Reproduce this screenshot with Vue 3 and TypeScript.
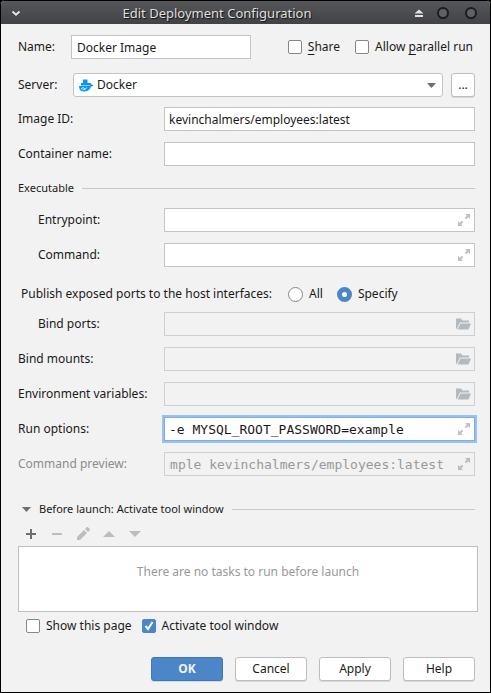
<script setup lang="ts">
import { reactive } from 'vue'

const form = reactive({
  name: 'Docker Image',
  share: false,
  parallel: false,
  server: 'Docker',
  imageId: 'kevinchalmers/employees:latest',
  container: '',
  entrypoint: '',
  command: '',
  ports: 'specify',
  bindPorts: '',
  bindMounts: '',
  env: '',
  runOptions: '-e MYSQL_ROOT_PASSWORD=example',
  showPage: false,
  activate: true,
})

const preview = 'docker run -e MYSQL_ROOT_PASSWORD=example kevinchalmers/employees:latest'

type TextKey = 'imageId' | 'container' | 'entrypoint' | 'command' | 'bindPorts' | 'bindMounts' | 'env' | 'runOptions'
interface Field {
  key: TextKey
  label: string
  indent?: boolean
  icon?: 'expand' | 'folder'
  disabled?: boolean
  focused?: boolean
}

const imageFields: Field[] = [
  { key: 'imageId', label: 'Image ID:' },
  { key: 'container', label: 'Container name:' },
]
const execFields: Field[] = [
  { key: 'entrypoint', label: 'Entrypoint:', indent: true, icon: 'expand' },
  { key: 'command', label: 'Command:', indent: true, icon: 'expand' },
]
const runFields: Field[] = [
  { key: 'bindPorts', label: 'Bind ports:', indent: true, icon: 'folder', disabled: true },
  { key: 'bindMounts', label: 'Bind mounts:', icon: 'folder', disabled: true },
  { key: 'env', label: 'Environment variables:', icon: 'folder', disabled: true },
  { key: 'runOptions', label: 'Run options:', icon: 'expand', focused: true },
]
const groups = [
  { id: 'image', fields: imageFields },
  { id: 'exec', fields: execFields },
  { id: 'run', fields: runFields },
]
</script>

<template>
  <div class="window">
    <header class="titlebar">
      <button class="tb-btn" aria-label="Window menu">
        <svg width="18" height="16" viewBox="0 0 18 16"><path d="M5.500 6.500 9 9.700l3.500-3.200" fill="none" stroke="#e8e8e8" stroke-width="1.800" /></svg>
      </button>
      <h1>Edit Deployment Configuration</h1>
      <div class="tb-right">
        <button class="tb-btn" aria-label="Keep above">
          <svg width="16" height="16" viewBox="0 0 16 16"><path d="M8 4.500l4.500 4h-9zM4 10h8v2H4z" fill="#e2e2e2" /></svg>
        </button>
        <button v-for="b in ['Maximize', 'Close']" :key="b" class="tb-btn" :aria-label="b">
          <svg width="16" height="16" viewBox="0 0 16 16">
            <circle cx="8" cy="8" r="5" fill="#606163" stroke="#1b1c1e" stroke-width="2" />
            <path d="M3 10.500a5.500 5.500 0 0 0 10 0" fill="none" stroke="#1b1c1e" />
          </svg>
        </button>
      </div>
    </header>

    <form class="body" @submit.prevent>
      <div class="row name-row">
        <label for="name" class="short">Name:</label>
        <input id="name" v-model="form.name" class="text name" type="text" />
        <div class="checks">
          <label class="tick"><span class="box"><input v-model="form.share" type="checkbox" /></span><span><u>S</u>hare</span></label>
          <label class="tick"><span class="box"><input v-model="form.parallel" type="checkbox" /></span><span>Allow <u>p</u>arallel run</span></label>
        </div>
      </div>

      <div class="row server-row">
        <label for="server" class="short">Server:</label>
        <div class="combo">
          <svg class="whale" width="16" height="16" viewBox="0 0 16 16">
            <path d="M5 2.500h4.500V6H12v2.500H3V6h2z" fill="#0a96ee" />
            <path d="M1 9h11.200c-.6-1.500-.3-2.500.3-3.200.7.5 1 1.100 1 1.900.7 0 1.200.1 1.700.5-.5 1-1.200 1.400-2.300 1.500C12 12.500 9.700 14.500 6 14.500c-3.300 0-5-2-5-5.500z" fill="#0a96ee" />
            <path d="M3 12l2-1.500 2 1.500 2-1.500M4.500 13l1.500-1 1.500 1" fill="none" stroke="#fff" stroke-width=".8" />
          </svg>
          <select id="server" v-model="form.server"><option>Docker</option></select>
          <svg class="arrow" width="9" height="5" viewBox="0 0 9 5"><path d="M0 0h9L4.500 5z" fill="#6e6e6e" /></svg>
        </div>
        <button type="button" class="btn more" aria-label="Browse servers">...</button>
      </div>

      <template v-for="g in groups" :key="g.id">
        <div v-if="g.id === 'exec'" class="section exec"><span>Executable</span></div>
        <div v-if="g.id === 'run'" class="ports" role="radiogroup" aria-labelledby="ports-label">
          <span id="ports-label">Publish exposed ports to the host interfaces:</span>
          <label class="tick"><input v-model="form.ports" type="radio" name="ports" value="all" /><span>All</span></label>
          <label class="tick"><input v-model="form.ports" type="radio" name="ports" value="specify" /><span>Specify</span></label>
        </div>
        <div class="fields">
          <div v-for="f in g.fields" :key="f.key" class="row">
            <label :for="f.key" class="long" :class="{ indent: f.indent }">{{ f.label }}</label>
            <div class="field" :class="{ disabled: f.disabled, focused: f.focused }">
              <input :id="f.key" v-model="form[f.key]" type="text" :disabled="f.disabled" :class="{ mono: f.focused }" />
              <button v-if="f.icon" type="button" class="in-icon" :disabled="f.disabled" :aria-label="f.icon === 'expand' ? 'Expand' : 'Browse'">
                <svg v-if="f.icon === 'expand'" width="16" height="16" viewBox="0 0 16 16"><path d="M9 2h5v5l-1.800-1.800-2.100 2.100-1.400-1.400 2.100-2.100zM2 9l1.800 1.800 2.100-2.100 1.400 1.400-2.100 2.100L7 14H2z" fill="#bcc1c5" /></svg>
                <svg v-else width="16" height="16" viewBox="0 0 16 16"><path d="M0 2.500h5L6.500 4.500H13v2H4L1 12.500 0 13z" fill="#b3b9bd" /><path d="M4.500 7.500H15l-2.500 6H1.500z" fill="#b3b9bd" /></svg>
              </button>
            </div>
          </div>
          <div v-if="g.id === 'run'" class="row">
            <label for="preview" class="long muted">Command preview:</label>
            <div class="field disabled">
              <input id="preview" class="mono preview" type="text" :value="preview" readonly />
              <button type="button" class="in-icon" aria-label="Expand">
                <svg width="16" height="16" viewBox="0 0 16 16"><path d="M9 2h5v5l-1.800-1.800-2.100 2.100-1.400-1.400 2.100-2.100zM2 9l1.800 1.800 2.100-2.100 1.400 1.400-2.100 2.100L7 14H2z" fill="#b8bdc1" /></svg>
              </button>
            </div>
          </div>
        </div>
      </template>

      <div class="section launch">
        <svg width="9" height="5" viewBox="0 0 9 5"><path d="M0 0h9L4.500 5z" fill="#6e6e6e" /></svg>
        <span>Before launch: Activate tool window</span>
      </div>
      <div class="toolbar">
        <button type="button" aria-label="Add"><svg width="16" height="16" viewBox="0 0 16 16"><path d="M7 3h2v4h4v2H9v4H7V9H3V7h4z" fill="#6e6e6e" /></svg></button>
        <button type="button" disabled aria-label="Remove"><svg width="16" height="16" viewBox="0 0 16 16"><path d="M3 7h10v2H3z" fill="#bdbdbd" /></svg></button>
        <button type="button" disabled aria-label="Edit"><svg width="16" height="16" viewBox="0 0 16 16"><path d="M2 11l7-7 3 3-7 7H2zM10 3l1.500-1.500c.6-.6 1.200-.6 1.800 0l1.200 1.200c.6.600.6 1.200 0 1.800L13 6z" fill="#bdbdbd" /></svg></button>
        <button type="button" disabled aria-label="Move up"><svg width="16" height="16" viewBox="0 0 16 16"><path d="M2 11l6-6 6 6z" fill="#bdbdbd" /></svg></button>
        <button type="button" disabled aria-label="Move down"><svg width="16" height="16" viewBox="0 0 16 16"><path d="M2 5l6 6 6-6z" fill="#bdbdbd" /></svg></button>
      </div>
      <div class="tasks">There are no tasks to run before launch</div>
      <div class="options">
        <label class="tick"><span class="box"><input v-model="form.showPage" type="checkbox" /></span><span>Show this page</span></label>
        <label class="tick">
          <span class="box"><input v-model="form.activate" type="checkbox" /><svg v-if="form.activate" width="14" height="14" viewBox="0 0 14 14"><path d="M3.500 7l2.500 3 4.500-7" fill="none" stroke="#fff" stroke-width="2" /></svg></span>
          <span>Activate tool window</span>
        </label>
      </div>

      <footer class="actions">
        <button type="submit" class="btn primary">OK</button>
        <button type="button" class="btn">Cancel</button>
        <button type="button" class="btn">Apply</button>
        <button type="button" class="btn">Help</button>
      </footer>
    </form>
  </div>
</template>

<style>
body {
  background: #000;
}
</style>

<style scoped>
* {
  box-sizing: border-box;
}
.window {
  display: flex;
  flex-direction: column;
  min-height: 100vh;
  border: 1px solid #000;
  border-radius: 4px 4px 0 0;
  background: #f2f2f2;
  color: #1a1a1a;
  font: 12px/18px 'Noto Sans', sans-serif;
  overflow: hidden;
}
button, input, select {
  margin: 0;
  padding: 0;
  font: inherit;
  color: inherit;
  outline: none;
}
button {
  border: 0;
  background: none;
}
svg {
  display: block;
}
.titlebar {
  display: grid;
  grid-template-columns: 36px 1fr 88px;
  align-items: center;
  height: 23px;
  padding: 0 11px 0 6px;
  background: linear-gradient(#55575b, #404245);
}
.titlebar h1 {
  margin: 0;
  text-align: center;
  white-space: nowrap;
  font-size: 13px;
  font-weight: 400;
  color: #dfdfdf;
  text-shadow: 1px 1px 1px #111;
}
.tb-right {
  display: flex;
  justify-content: flex-end;
  gap: 12px;
}
.tb-right .tb-btn:first-child {
  margin-right: -4px;
}
.body {
  display: flex;
  flex-direction: column;
  flex: 1;
  padding: 11px 15px 11px 17px;
}
.row {
  display: flex;
  align-items: center;
  height: 24px;
}
.row label {
  white-space: nowrap;
}
.short {
  flex: none;
  width: 53px;
}
.text {
  height: 24px;
  padding: 0 5px;
  border: 1px solid #c4c4c4;
  background: #fff;
}
.name {
  width: 180px;
}
.checks {
  display: flex;
  gap: 15px;
  margin: 0 2px 0 auto;
}
.tick {
  display: flex;
  align-items: center;
  gap: 6px;
  white-space: nowrap;
}
.tick u {
  text-underline-offset: 3px;
}
.box {
  display: grid;
  width: 14px;
  height: 14px;
}
.box > * {
  grid-area: 1 / 1;
}
.box svg {
  pointer-events: none;
}
.tick input {
  appearance: none;
  width: 14px;
  height: 14px;
  border: 1px solid #878787;
  border-radius: 2px;
  background: #fff;
}
.tick input:checked {
  border-color: #4b86c8;
  background: #4b86c8;
}
.tick input[type='radio'] {
  width: 15px;
  height: 15px;
  border-radius: 50%;
}
.tick input[type='radio']:checked {
  border: 5px solid #4b86c8;
  background: #fff;
}
.server-row {
  margin: 14px 0 10px;
}
.server-row .short {
  width: 55px;
}
.combo {
  position: relative;
  flex: 1;
  height: 24px;
}
.combo select {
  appearance: none;
  width: 100%;
  height: 24px;
  padding: 0 23px;
  border: 1px solid #c4c4c4;
  border-radius: 3px;
  background: #fff;
}
.whale {
  position: absolute;
  left: 5px;
  top: 4px;
}
.arrow {
  position: absolute;
  right: 7px;
  top: 10px;
}
.btn {
  width: 72px;
  height: 24px;
  border: 1px solid #bdbdbd;
  border-radius: 3px;
  background: #fff;
  box-shadow: 0 1px 0 #d8d8d8;
}
.more {
  width: 24px;
  margin-left: 8px;
}
.fields {
  display: grid;
  gap: 11px;
}
.long {
  flex: none;
  width: 146px;
}
.indent {
  padding-left: 20px;
}
.muted {
  color: #8c8c8c;
}
.field {
  display: flex;
  align-items: center;
  flex: 1;
  min-width: 0;
  height: 24px;
  padding: 0 2px 0 4px;
  border: 1px solid #c4c4c4;
  background: #fff;
}
.field input {
  flex: 1;
  min-width: 0;
  height: 20px;
  border: 0;
  background: transparent;
}
.field.disabled {
  border-color: #cfcfcf;
  background: #f2f2f2;
}
.field.focused {
  border-color: #7eade0;
  box-shadow: 0 0 0 2px #97c3f3;
}
.field .mono {
  font-family: 'DejaVu Sans Mono', monospace;
  font-size: 13px;
}
/* Right-to-left flow keeps the tail of a long command in view. */
.field .preview {
  margin-right: 12px;
  color: #999;
  direction: rtl;
}
.in-icon {
  flex: none;
}
.section {
  display: flex;
  align-items: center;
  gap: 8px;
  height: 18px;
  font-size: 11px;
  white-space: nowrap;
}
.section::after {
  content: '';
  flex: 1;
  height: 1px;
  background: #c9c9c9;
}
.exec {
  margin: 13px 0 11px;
}
.ports {
  display: flex;
  align-items: center;
  gap: 14px;
  height: 18px;
  margin: 18px 0 9px;
  padding-left: 3px;
  white-space: nowrap;
}
.ports .tick:nth-child(2) {
  margin-left: 2px;
}
.launch {
  margin-top: 24px;
  padding-left: 4px;
}
.toolbar {
  display: flex;
  gap: 10px;
  margin: 8px 0 4px;
  padding-left: 5px;
}
.tasks {
  height: 66px;
  margin-right: -3px;
  padding-top: 16px;
  border: 1px solid #bfbfbf;
  background: #fff;
  color: #999;
  text-align: center;
}
.options {
  display: flex;
  gap: 10px;
  margin-top: 5px;
  padding-left: 8px;
}
.actions {
  display: flex;
  justify-content: flex-end;
  gap: 12px;
  margin-top: auto;
}
.primary {
  border-color: #3f77b8;
  background: #4b86c8;
  color: #f2f2f2;
  font-weight: 700;
}
</style>
